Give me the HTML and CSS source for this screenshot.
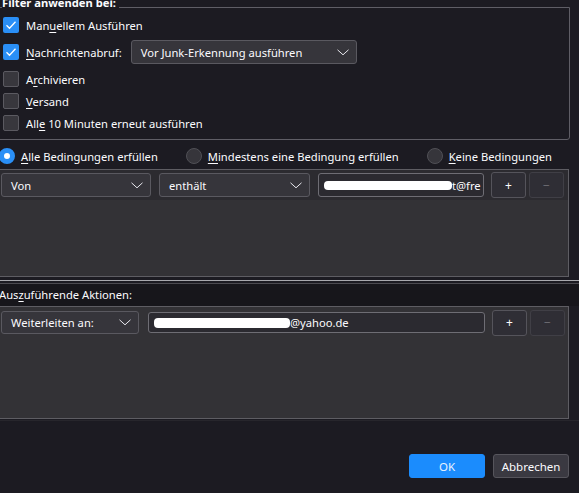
FILE: index.html
```html
<!DOCTYPE html>
<html lang="de">
<head>
<meta charset="utf-8">
<title>Filterregeln</title>
<link rel="stylesheet" href="styles.css">
</head>
<body>
<div class="dialog">
  <div class="group">
    <div class="legend">Filter anwenden bei:</div>
    <div class="row">
      <span class="box on"><svg viewBox="0 0 16 16" width="16" height="16"><path d="M3.5 8.2 L6.5 11.2 L12.5 4.8" fill="none" stroke="#fff" stroke-width="1.3"/></svg></span>
      <span class="lbl">Man<u>u</u>ellem Ausführen</span>
    </div>
    <div class="row tall">
      <span class="box on"><svg viewBox="0 0 16 16" width="16" height="16"><path d="M3.5 8.2 L6.5 11.2 L12.5 4.8" fill="none" stroke="#fff" stroke-width="1.3"/></svg></span>
      <span class="lbl"><u>N</u>achrichtenabruf:</span>
      <div class="select junk"><span>Vor Junk-Erkennung ausführen</span><svg class="chev" viewBox="0 0 12 7" width="12" height="7"><path d="M0.5 0.8 L6 5.8 L11.5 0.8" fill="none" stroke="#e8e8ee" stroke-width="1"/></svg></div>
    </div>
    <div class="row">
      <span class="box"></span>
      <span class="lbl">A<u>r</u>chivieren</span>
    </div>
    <div class="row">
      <span class="box"></span>
      <span class="lbl"><u>V</u>ersand</span>
    </div>
    <div class="row">
      <span class="box"></span>
      <span class="lbl">All<u>e</u> 10 Minuten erneut ausführen</span>
    </div>
  </div>

  <div class="radios">
    <div class="radio-item"><span class="radio on"></span><span class="lbl"><u>A</u>lle Bedingungen erfüllen</span></div>
    <div class="radio-item"><span class="radio"></span><span class="lbl"><u>M</u>indestens eine Bedingung erfüllen</span></div>
    <div class="radio-item"><span class="radio"></span><span class="lbl"><u>K</u>eine Bedingungen</span></div>
  </div>

  <div class="list cond">
    <div class="item">
      <div class="select von"><span>Von</span><svg class="chev" viewBox="0 0 12 7" width="12" height="7"><path d="M0.5 0.8 L6 5.8 L11.5 0.8" fill="none" stroke="#e8e8ee" stroke-width="1"/></svg></div>
      <div class="select enth"><span>enthält</span><svg class="chev" viewBox="0 0 12 7" width="12" height="7"><path d="M0.5 0.8 L6 5.8 L11.5 0.8" fill="none" stroke="#e8e8ee" stroke-width="1"/></svg></div>
      <div class="input cin"><span class="redact r1"></span><span class="val">t@fre</span></div>
      <div class="btn small">+</div>
      <div class="btn small dis">−</div>
    </div>
  </div>

  <div class="sep"></div>
  <div class="caption">Aus<u>z</u>uführende Aktionen:</div>

  <div class="list act">
    <div class="item">
      <div class="select fwd"><span>Weiterleiten an:</span><svg class="chev" viewBox="0 0 12 7" width="12" height="7"><path d="M0.5 0.8 L6 5.8 L11.5 0.8" fill="none" stroke="#e8e8ee" stroke-width="1"/></svg></div>
      <div class="input ain"><span class="redact r2"></span><span class="val">@yahoo.de</span></div>
      <div class="btn small">+</div>
      <div class="btn small dis">−</div>
    </div>
  </div>

  <div class="footer">
    <div class="btn big primary">OK</div>
    <div class="btn big">Abbrechen</div>
  </div>
</div>
</body>
</html>
```
FILE: styles.css
```css
html, body {
  margin: 0;
  padding: 0;
}
body {
  background: #1c1b22;
  color: #fbfbfe;
  font-family: "Noto Sans", "Open Sans", sans-serif;
  font-size: 11.2px;
  width: 579px;
  height: 493px;
  overflow: hidden;
}
u {
  text-decoration-thickness: 1px;
  text-underline-offset: 2px;
}
.dialog {
  display: flex;
  flex-direction: column;
  height: 493px;
}
.group {
  position: relative;
  margin: 7px 9px 0 -1px;
  border: 1px solid #5f5e66;
  border-radius: 0 0 3px 0;
  padding: 6px 0 5px 3px;
}
.legend {
  position: absolute;
  left: 2px;
  top: -13px;
  line-height: 16px;
  font-weight: bold;
  background: #1c1b22;
  padding-right: 3px;
}
.row {
  display: flex;
  align-items: center;
  height: 22px;
}
.row.tall {
  height: 32px;
}
.box {
  width: 14px;
  height: 14px;
  border: 1px solid #5b5a61;
  background: #38373d;
  border-radius: 2px;
  flex: none;
  display: flex;
}
.box.on {
  width: 16px;
  height: 16px;
  border: none;
  background: #2a8ff6;
}
.lbl {
  margin-left: 7px;
  white-space: nowrap;
}
.select {
  display: flex;
  align-items: center;
  justify-content: space-between;
  box-sizing: border-box;
  height: 24px;
  border: 1px solid #5a5960;
  border-radius: 3px;
  background: #36353b;
  padding: 0 7px 0 9px;
  white-space: nowrap;
}
.select .chev {
  flex: none;
}
.select.junk {
  width: 226px;
  margin-left: 9px;
}
.radios {
  display: flex;
  align-items: center;
  height: 22px;
  margin: 5px 0 2px -1px;
  gap: 28px;
}
.radio-item {
  display: flex;
  align-items: center;
}
.radio-item .lbl {
  margin-left: 6px;
}
.radio {
  box-sizing: border-box;
  width: 16px;
  height: 16px;
  border-radius: 50%;
  border: 1px solid #505056;
  background: #36353b;
  flex: none;
}
.radio.on {
  border: 5px solid #2a8ff6;
  background: #ffffff;
}
.list {
  margin: 0 10px 0 -1px;
  border: 1px solid #5e5d63;
  background: #333236;
}
.list.cond {
  height: 106px;
}
.list.act {
  height: 111px;
}
.item {
  display: flex;
  align-items: center;
  height: 30px;
  padding-left: 1px;
  background: #2c2b30;
}
.act .item {
  background: #333236;
  height: 29px;
  padding-top: 1px;
}
.select.von {
  width: 150px;
}
.select.enth {
  width: 151px;
  margin-left: 8px;
}
.select.fwd {
  width: 138px;
  height: 23px;
}
.input {
  box-sizing: border-box;
  height: 24px;
  border: 1px solid #6e6d74;
  border-radius: 3px;
  background: #2b2a30;
  display: flex;
  align-items: center;
  padding-left: 5px;
  overflow: hidden;
  white-space: nowrap;
}
.input.cin {
  width: 166px;
  margin-left: 8px;
}
.input.ain {
  width: 337px;
  height: 21px;
  margin-left: 9px;
}
.redact {
  display: inline-block;
  background: #ffffff;
  border-radius: 4px;
  flex: none;
}
.redact.r1 {
  width: 128px;
  height: 9px;
}
.redact.r2 {
  width: 136px;
  height: 10px;
}
.btn {
  box-sizing: border-box;
  display: flex;
  align-items: center;
  justify-content: center;
  border: 1px solid #55545b;
  border-radius: 3px;
  background: #2f2e35;
  flex: none;
}
.btn.small {
  width: 35px;
  height: 26px;
  font-size: 12px;
  margin-left: 7px;
}
.btn.small.dis {
  margin-left: 3px;
  color: #6d6c72;
  border-color: #403f46;
}
.sep {
  margin-top: 3px;
  height: 2px;
  border-top: 1px solid #a9a9ae;
  border-bottom: 1px solid #4b4a50;
}
.caption {
  height: 22px;
  line-height: 22px;
  margin-left: -1px;
  background: #17161b;
}
.footer {
  margin-top: 1px;
  border-top: 1px solid #27262c;
  flex: 1;
  display: flex;
  justify-content: flex-end;
  align-items: flex-start;
  padding: 33px 10px 0 0;
  gap: 8px;
}
.btn.big {
  width: 76px;
  height: 24px;
  font-size: 11.5px;
  background: #3a3941;
  border-color: #56555c;
}
.btn.big.primary {
  background: #1b8cfd;
  border-color: #1b8cfd;
  color: #e9f3ff;
}
```
